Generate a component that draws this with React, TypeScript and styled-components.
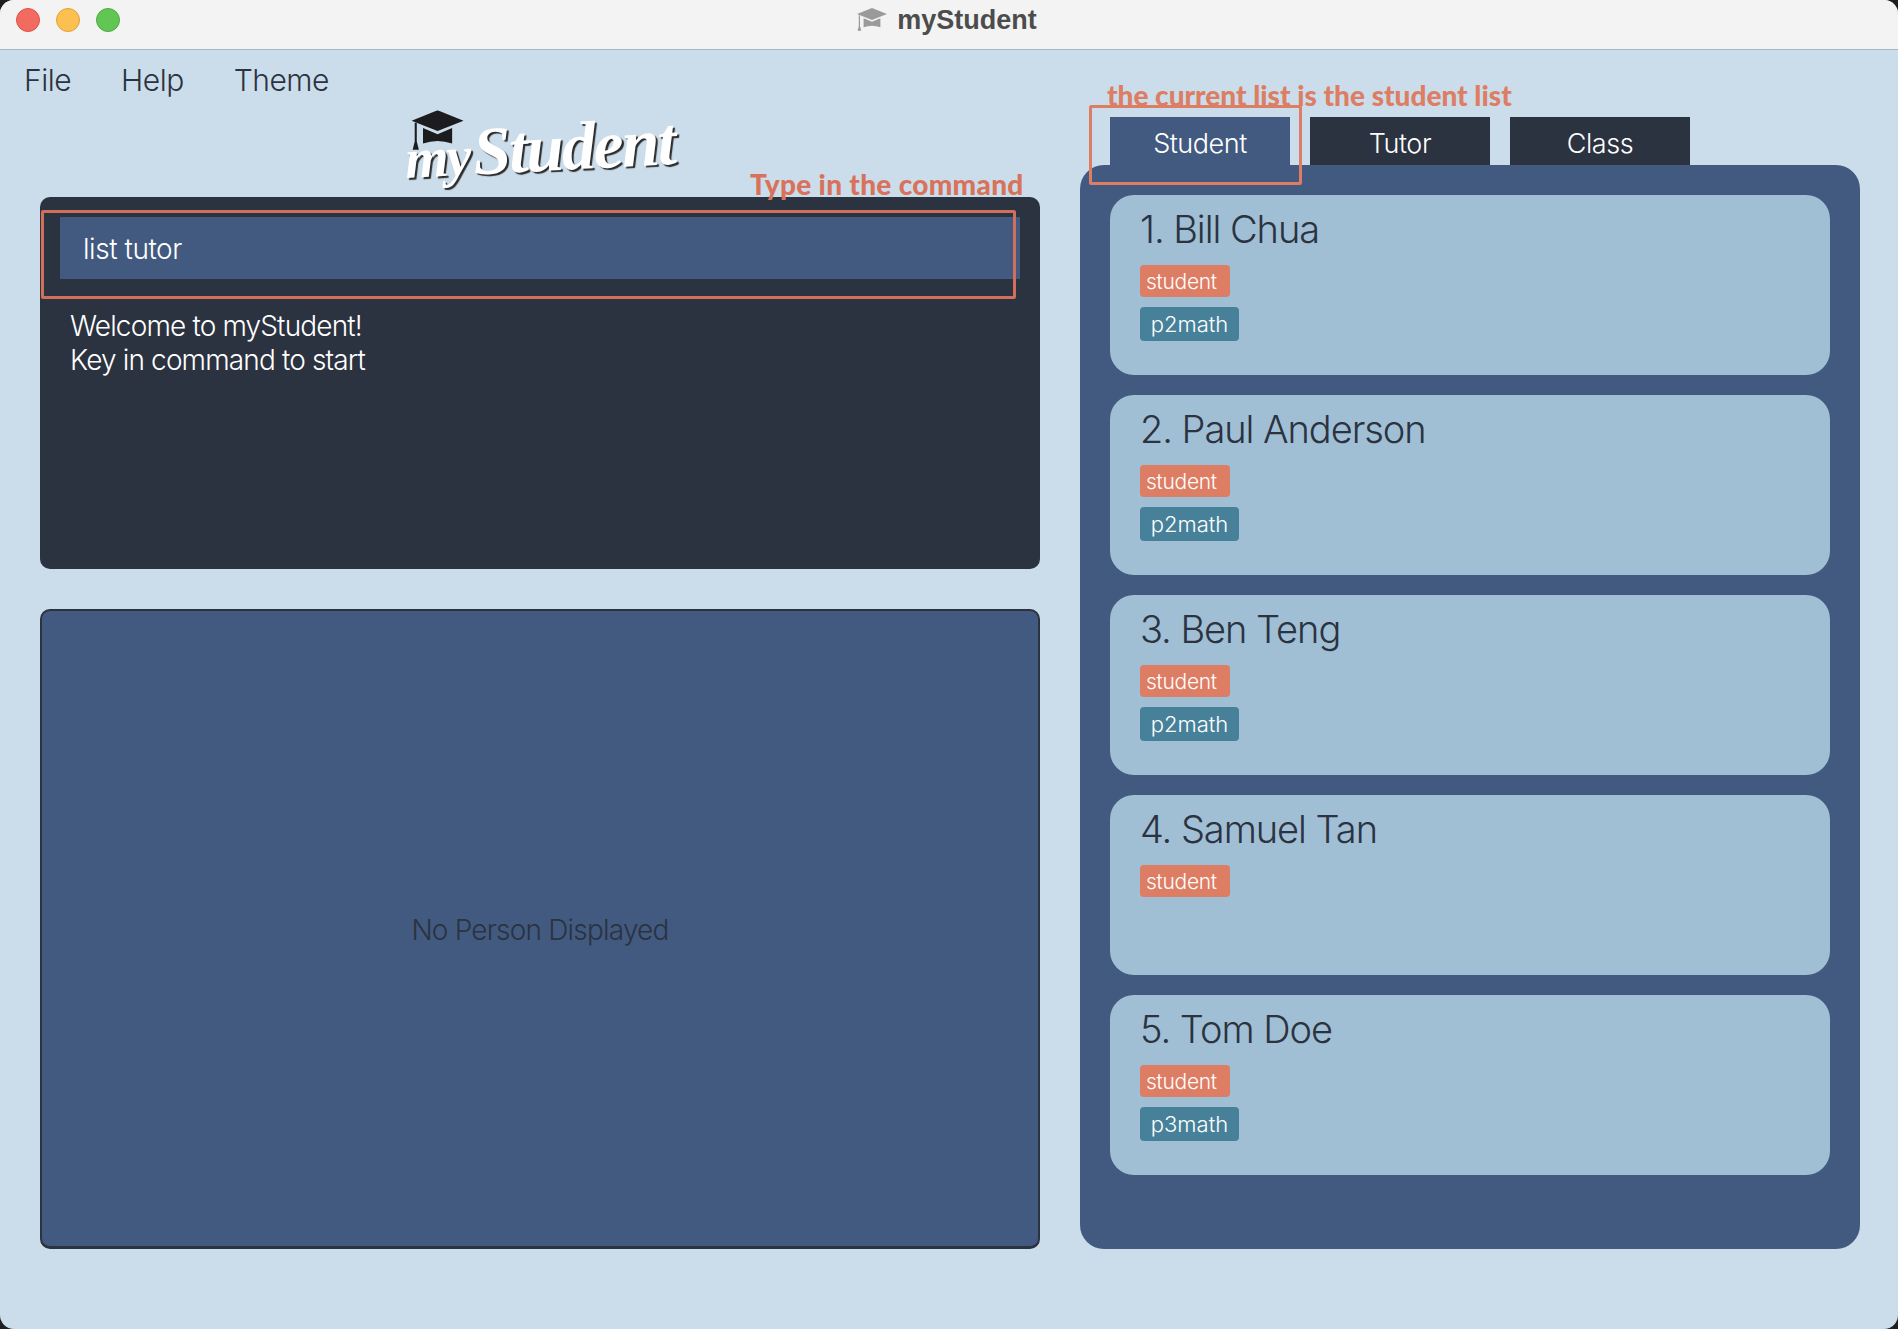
import styled, {createGlobalStyle} from "styled-components";

const GlobalStyle = createGlobalStyle`
    html, body {
        margin: 0;
        padding: 0;
        background: #1f1f1f;
    }
    * {
        box-sizing: border-box;
    }
`

const students = [
    {name: "1. Bill Chua", tags: ["p2math"]},
    {name: "2. Paul Anderson", tags: ["p2math"]},
    {name: "3. Ben Teng", tags: ["p2math"]},
    {name: "4. Samuel Tan", tags: []},
    {name: "5. Tom Doe", tags: ["p3math"]},
];

const Cap = ({size, color}: { size: number; color: string }) => (
    <svg width={size} height={size * 0.78} viewBox="0 0 50 39">
        <path d="M25 0 L50 10 L25 20 L0 10 Z" fill={color}/>
        <path d="M11 17 L25 23 L39 17 L39 32 Q25 27 11 32 Z" fill={color}/>
        <path d="M3 12 L5 12 L5 30 L7 38 L1 38 L3 30 Z" fill={color}/>
    </svg>
);

export default function App() {
    return (
        <Window>
            <GlobalStyle/>
            <TitleBar>
                <Lights>
                    <Light $color={"#f26b60"} $edge={"#d9544a"}/>
                    <Light $color={"#fbc04f"} $edge={"#dfa03a"}/>
                    <Light $color={"#62c655"} $edge={"#4fab44"}/>
                </Lights>
                <Title>
                    <Cap size={30} color={"#9a9a9a"}/>
                    <TitleText>myStudent</TitleText>
                </Title>
            </TitleBar>
            <MenuBar>
                <MenuItem>File</MenuItem>
                <MenuItem>Help</MenuItem>
                <MenuItem>Theme</MenuItem>
            </MenuBar>
            <Main>
                <LeftColumn>
                    <LogoRow>
                        <Logo>
                            <LogoCap>
                                <Cap size={52} color={"#1c1c1e"}/>
                            </LogoCap>
                            <LogoSmall>my</LogoSmall>
                            <LogoBig>Student</LogoBig>
                        </Logo>
                    </LogoRow>
                    <CommandPanel>
                        <CommandInput>list tutor</CommandInput>
                        <Output>
                            Welcome to myStudent!<br/>
                            Key in command to start
                        </Output>
                    </CommandPanel>
                    <DetailPanel>No Person Displayed</DetailPanel>
                </LeftColumn>
                <RightColumn>
                    <Tabs>
                        <Tab $active>Student</Tab>
                        <Tab>Tutor</Tab>
                        <Tab>Class</Tab>
                    </Tabs>
                    <ListPanel>
                        {students.map(s => (
                            <Card key={s.name}>
                                <Name>{s.name}</Name>
                                <TagList>
                                    <StudentTag>student</StudentTag>
                                    {s.tags.map(t => <ClassTag key={t}>{t}</ClassTag>)}
                                </TagList>
                            </Card>
                        ))}
                    </ListPanel>
                </RightColumn>
            </Main>
            <CommandNote>Type in the command</CommandNote>
            <CommandOutline/>
            <ListNote>the current list is the student list</ListNote>
            <ListOutline/>
        </Window>
    );
}

const Window = styled.div`
    position: relative;
    width: 1898px;
    height: 1329px;
    overflow: hidden;
    background-color: #cbddea;
    border-radius: 14px;
    font-family: Inter, "Liberation Sans", sans-serif;
`
const TitleBar = styled.header`
    position: relative;
    height: 50px;
    background-color: #f3f3f3;
    border-bottom: 1px solid #a9b6c0;
    display: flex;
    align-items: center;
    justify-content: center;
`
const Lights = styled.div`
    position: absolute;
    left: 16px;
    top: 8px;
    display: flex;
    gap: 16px;
`
const Light = styled.span<{ $color: string; $edge: string }>`
    width: 24px;
    height: 24px;
    border-radius: 50%;
    background-color: ${props => props.$color};
    border: 1px solid ${props => props.$edge};
`
const Title = styled.div`
    display: flex;
    align-items: center;
    gap: 10px;
    margin-top: -9px;
    margin-left: -4px;
`
const TitleText = styled.span`
    font-family: "Liberation Sans", sans-serif;
    font-weight: 700;
    font-size: 27px;
    color: #4c4c4c;
`
const MenuBar = styled.nav`
    height: 67px;
    padding-left: 24px;
    padding-bottom: 8px;
    display: flex;
    align-items: center;
    gap: 50px;
`
const MenuItem = styled.span`
    font-size: 30px;
    font-weight: 300;
    letter-spacing: -0.5px;
    color: #2b3240;
`
const Main = styled.main`
    padding: 0 38px 0 40px;
    display: grid;
    grid-template-columns: 1000px 780px;
    column-gap: 40px;
`
const LeftColumn = styled.section`
    display: flex;
    flex-direction: column;
`
const LogoRow = styled.div`
    height: 80px;
    display: flex;
    justify-content: center;
`
const Logo = styled.div`
    position: relative;
    height: 80px;
    display: flex;
    align-items: baseline;
    font-family: "Liberation Serif", serif;
    font-style: italic;
    font-weight: 700;
    color: #ffffff;
    text-shadow: 2px 2px 1px #2b2b2b;
    transform: rotate(-3deg);
`
const LogoCap = styled.div`
    position: absolute;
    left: 8px;
    top: -12px;
    transform: rotate(3deg);
`
const LogoSmall = styled.span`
    font-size: 56px;
    line-height: 62px;
    letter-spacing: -2px;
`
const LogoBig = styled.span`
    font-size: 68px;
    line-height: 62px;
    letter-spacing: -2px;
    margin-left: 4px;
`
const CommandPanel = styled.div`
    height: 372px;
    padding: 20px;
    background-color: #2b3240;
    border-radius: 10px;
`
const CommandInput = styled.div`
    height: 62px;
    padding: 2px 0 0 23px;
    display: flex;
    align-items: center;
    background-color: #425a80;
    font-size: 28px;
    font-weight: 300;
    letter-spacing: -0.45px;
    color: #ffffff;
`
const Output = styled.div`
    margin-top: 30px;
    padding-left: 10px;
    font-size: 28px;
    line-height: 34px;
    font-weight: 300;
    letter-spacing: -0.85px;
    color: #ffffff;
`
const DetailPanel = styled.div`
    margin-top: 40px;
    height: 640px;
    padding-top: 2px;
    display: flex;
    align-items: center;
    justify-content: center;
    background-color: #425a80;
    border: 2px solid #2b3240;
    border-bottom-width: 3px;
    border-radius: 10px;
    font-size: 28px;
    font-weight: 300;
    letter-spacing: -0.8px;
    color: #2b3240;
`
const RightColumn = styled.section`
    display: flex;
    flex-direction: column;
`
const Tabs = styled.div`
    height: 48px;
    padding-left: 30px;
    display: flex;
    gap: 20px;
`
const Tab = styled.div<{ $active?: boolean }>`
    width: 180px;
    padding-top: 4px;
    display: flex;
    align-items: center;
    justify-content: center;
    background-color: ${props => props.$active ? "#425a80" : "#2b3240"};
    font-size: 27px;
    font-weight: 300;
    letter-spacing: -0.45px;
    color: #ffffff;
`
const ListPanel = styled.div`
    height: 1084px;
    padding: 30px 30px 0;
    display: flex;
    flex-direction: column;
    gap: 20px;
    background-color: #425a80;
    border-radius: 24px;
`
const Card = styled.article`
    height: 180px;
    padding: 4px 30px 0;
    background-color: #a0bfd5;
    border-radius: 24px;
`
const Name = styled.div`
    height: 60px;
    line-height: 60px;
    font-size: 38px;
    font-weight: 300;
    letter-spacing: -1.05px;
    color: #2b3240;
`
const TagList = styled.div`
    margin-top: 6px;
    display: flex;
    flex-direction: column;
    align-items: flex-start;
    gap: 10px;
`
const StudentTag = styled.span`
    width: 90px;
    height: 32px;
    padding: 1px 0 0 6px;
    line-height: 32px;
    background-color: #dd7d63;
    border-radius: 4px;
    font-size: 21px;
    font-weight: 300;
    letter-spacing: -0.3px;
    color: #ffffff;
`
const ClassTag = styled.span`
    width: 99px;
    height: 34px;
    line-height: 34px;
    text-align: center;
    background-color: #478199;
    border-radius: 4px;
    font-size: 22px;
    font-weight: 300;
    color: #ffffff;
`
const Note = styled.span`
    position: absolute;
    font-family: Lato, "Open Sans", sans-serif;
    font-weight: 900;
    font-size: 28px;
    line-height: 30px;
    white-space: nowrap;
    color: #d9725a;
`
const CommandNote = styled(Note)`
    left: 750px;
    top: 169px;
    letter-spacing: 0.3px;
`
const ListNote = styled(Note)`
    left: 1107px;
    top: 80px;
    color: #dd7d63;
`
const CommandOutline = styled.div`
    position: absolute;
    left: 41px;
    top: 210px;
    width: 975px;
    height: 89px;
    border: 3px solid #d0705a;
    border-radius: 2px;
`
const ListOutline = styled.div`
    position: absolute;
    left: 1089px;
    top: 105px;
    width: 213px;
    height: 80px;
    border: 3px solid #dd7d63;
    border-radius: 2px;
`
